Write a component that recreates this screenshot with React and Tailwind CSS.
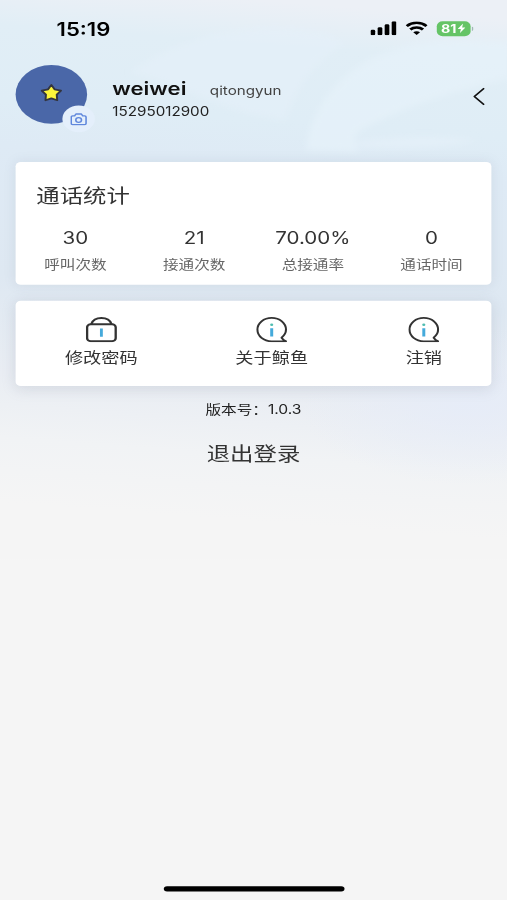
const STATS = [
  { label: '呼叫次数', value: '30' },
  { label: '接通次数', value: '21' },
  { label: '总接通率', value: '70.00%' },
  { label: '通话时间', value: '0' },
]

const ACTIONS = [
  { label: '修改密码', Icon: LockIcon },
  { label: '关于鲸鱼', Icon: InfoIcon },
  { label: '注销', Icon: InfoIcon },
]

// Laid out on a 390x844 phone canvas, then stretched to fill the frame.
export default function App() {
  return (
    <div className="w-[507px] h-[900px] overflow-hidden bg-[#f5f5f5]">
      <div className="relative isolate flex flex-col w-[390px] h-[844px] origin-top-left scale-x-[1.3] scale-y-[1.0664] font-[Inter,'Noto_Sans_CJK_SC',sans-serif] text-[#333]">
        <Backdrop />
        <StatusBar />
        <ProfileHeader />
        <main className="flex flex-col mx-[12.4px] mt-[29px]">
          <StatsCard />
          <ActionsCard />
          <p className="mt-[14.5px] text-center text-xs leading-4 text-[#222]">版本号：1.0.3</p>
          <button className="mt-[20px] text-center text-lg leading-7">退出登录</button>
        </main>
        <div className="mt-auto mb-[8px] mx-auto w-[139px] h-[5px] rounded-full bg-black" />
      </div>
    </div>
  )
}

function StatusBar() {
  return (
    <header className="flex items-center justify-between h-[53px] pl-[43.5px] pr-[26px] text-black">
      <span className="text-[17px] font-semibold leading-5 translate-y-[0.6px]">15:19</span>
      <div className="flex items-center">
        <svg className="w-[20px] h-[13px]" viewBox="0 0 20 13" fill="currentColor">
          <rect x="0" y="8" width="3.6" height="5" rx="1.2" />
          <rect x="5.5" y="5.6" width="3.6" height="7.4" rx="1.2" />
          <rect x="10.9" y="2.8" width="3.6" height="10.2" rx="1.2" />
          <rect x="16.3" y="0" width="3.6" height="13" rx="1.2" />
        </svg>
        <svg className="ml-[7px] w-[17px] h-[13px]" viewBox="0 0 17 13" fill="none" stroke="currentColor" strokeWidth="2.4">
          <path d="M.9 4.5C5.1.3 11.9.3 16.1 4.5" />
          <path d="M3.6 7.7c2.7-2.6 7.1-2.6 9.8 0" />
          <path d="M5.9 10.3c1.5-1.4 3.7-1.4 5.2 0L8.5 12.8z" fill="currentColor" stroke="none" />
        </svg>
        <div className="ml-[7px] flex items-center justify-center w-[26px] h-[14px] rounded-[4.5px] bg-[#65c466] text-white">
          <span className="text-[11px] font-bold leading-[14px]">81</span>
          <svg className="ml-px w-[6px] h-[9px]" viewBox="0 0 5 9" preserveAspectRatio="none" fill="currentColor">
            <path d="M3.5 0 0 5.1h2.1L1.5 9 5 3.9H2.9z" />
          </svg>
        </div>
        <span className="ml-px w-[1.3px] h-[4px] rounded-r-full bg-[#9fb8b2]" />
      </div>
    </header>
  )
}

function ProfileHeader() {
  return (
    <section className="flex items-center h-[70px] pl-[12.4px] pr-[17px]">
      <div className="relative flex items-center justify-center size-[55px] rounded-full bg-[#4a67a8]">
        <svg className="w-[17px] h-[18px] -mt-[2px]" viewBox="0 0 20 20" preserveAspectRatio="none">
          <path
            d="M10 1.8 12.9 6.4 18.7 7.8 14.9 12 15.3 17.8 10 15.8 4.7 17.8 5.1 12 1.3 7.8 7.1 6.4z"
            fill="#fcf53a"
            stroke="#33353f"
            strokeWidth="1.8"
            strokeLinejoin="round"
          />
        </svg>
        <span className="absolute left-[35.5px] top-[38.5px] flex items-center justify-center size-[25px] rounded-full bg-[#e4effb]">
          <CameraIcon />
        </span>
      </div>
      <div className="ml-[19px] mt-[10px] flex-1">
        <div className="flex items-baseline">
          <h1 className="text-[17px] font-semibold leading-5 text-[#111]">weiwei</h1>
          <span className="ml-[18px] text-[11.7px] leading-5 text-[#444]">qitongyun</span>
        </div>
        <p className="mt-[2.5px] text-[11.7px] leading-4 text-[#222]">15295012900</p>
      </div>
      <svg className="mt-[5px] w-[9px] h-[17px]" viewBox="0 0 9 17" fill="none" stroke="#111" strokeWidth="1.4">
        <path d="M8.4.8.9 8.5l7.5 7.7" />
      </svg>
    </section>
  )
}

function StatsCard() {
  return (
    <section className="h-[115px] rounded-[4px] bg-white shadow-[0_0_10px_rgba(120,130,150,0.14)]">
      <h2 className="pt-[17.5px] pl-[15.5px] text-lg leading-7">通话统计</h2>
      <div className="grid grid-cols-4 mt-[14px] text-center">
        {STATS.map((s) => (
          <div key={s.label}>
            <div className="text-[15.8px] leading-6">{s.value}</div>
            <div className="mt-[4.5px] text-xs leading-4 text-[#666]">{s.label}</div>
          </div>
        ))}
      </div>
    </section>
  )
}

function ActionsCard() {
  return (
    <section className="flex justify-around mt-[14.5px] h-[80px] pt-[15px] rounded-[4px] bg-white shadow-[0_2px_12px_rgba(120,130,150,0.2)]">
      {ACTIONS.map(({ label, Icon }) => (
        <button key={label} className="flex flex-col items-center">
          <Icon />
          <span className="mt-[4.5px] text-sm leading-5">{label}</span>
        </button>
      ))}
    </section>
  )
}

function CameraIcon() {
  return (
    <svg className="w-[13px] h-[12px]" viewBox="0 0 13 12" fill="none" stroke="#5f87dc" strokeWidth="1.2" strokeLinejoin="round">
      <path d="M1.8 2.6h1.6L4.4.9h4.2l1 1.7h1.6c.6 0 1 .4 1 1v6.2c0 .6-.4 1-1 1H1.8c-.6 0-1-.4-1-1V3.6c0-.6.4-1 1-1z" />
      <circle cx="6.5" cy="6.5" r="2.2" />
    </svg>
  )
}

function LockIcon() {
  return (
    <svg className="size-[24px]" viewBox="0 0 24 24" fill="none" stroke="#333" strokeWidth="1.8">
      <rect x="1" y="7" width="22" height="16" rx="2.8" />
      <path d="M4.2 7C5.3 3.2 8.3 1.2 12 1.2S18.7 3.2 19.8 7" />
      <path d="M12 11v7.8" stroke="#45aadb" strokeWidth="2.2" />
    </svg>
  )
}

function InfoIcon() {
  return (
    <svg className="size-[24px]" viewBox="0 0 24 24" fill="none" stroke="#333" strokeWidth="1.6">
      <path d="M23 23.1H12C5.8 23.1 1 18.3 1 12.1S5.8 1.1 12 1.1s11 4.8 11 11c0 3.2-1.3 5.6-3.4 7.6.8 1.4 1.8 2.5 3.4 3.4z" strokeLinejoin="round" />
      <path d="M12 10.8v7.8" stroke="#45aadb" strokeWidth="2.3" />
      <circle cx="12" cy="7.6" r="1.2" fill="#4fbdb0" stroke="none" />
    </svg>
  )
}

// Pale sky gradient with soft swooshes behind the header.
function Backdrop() {
  return (
    <svg className="absolute inset-x-0 top-0 -z-10 w-[390px] h-[525px]" viewBox="0 0 507 560" preserveAspectRatio="none" aria-hidden>
      <defs>
        <linearGradient id="sky" gradientUnits="userSpaceOnUse" x1="253" y1="0" x2="213" y2="540">
          <stop offset="0" stopColor="#ecf0f6" />
          <stop offset="0.08" stopColor="#e1eef6" />
          <stop offset="0.22" stopColor="#dfedf6" />
          <stop offset="0.3" stopColor="#deeaf5" />
          <stop offset="0.54" stopColor="#dee8f2" />
          <stop offset="0.72" stopColor="#e9edf3" />
          <stop offset="0.84" stopColor="#f1f3f5" />
          <stop offset="0.96" stopColor="#f5f5f5" />
        </linearGradient>
        <radialGradient id="haze">
          <stop offset="0" stopColor="#e6ecf8" stopOpacity="0.9" />
          <stop offset="1" stopColor="#e6ecf8" stopOpacity="0" />
        </radialGradient>
        <filter id="soft" x="-10%" y="-10%" width="120%" height="120%">
          <feGaussianBlur stdDeviation="3" />
        </filter>
      </defs>
      <rect width="507" height="560" fill="url(#sky)" />
      <g filter="url(#soft)" fill="#e6f1f9">
        <path d="M130 72C180 38 235 25 290 28c30 2 45 8 54 16-26 16-46 38-58 76-50-4-96-32-156-48z" opacity="0.55" />
        <path d="M306 150c6-50 44-94 110-106 34-6 64-4 95-2v36c-64 14-114 32-150 52-8 4-8 14-2 22z" opacity="0.75" />
        <path d="M355 142c40-6 90-6 122-2-30 8-80 10-122 6z" opacity="0.7" />
      </g>
      <ellipse cx="470" cy="405" rx="170" ry="80" fill="url(#haze)" />
    </svg>
  )
}
